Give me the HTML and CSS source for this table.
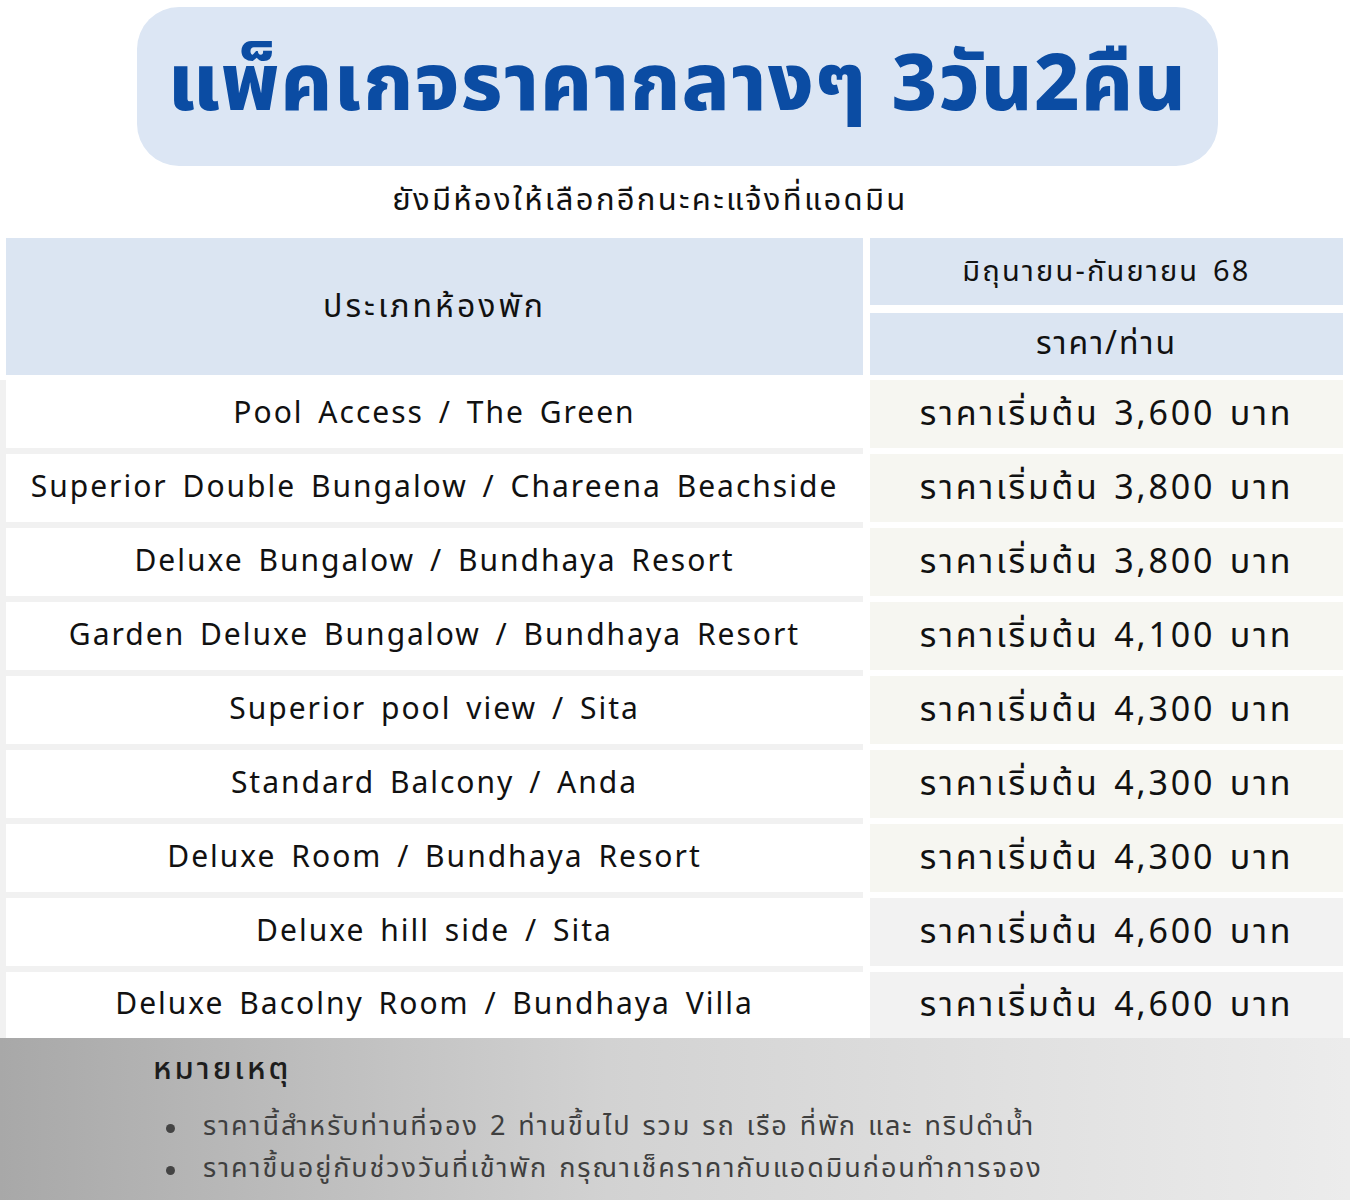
FILE: index.html
```html
<!DOCTYPE html>
<html lang="th">
<head>
<meta charset="utf-8">
<link rel="stylesheet" href="styles.css">
</head>
<body>
<div class="page">
  <header class="title-box">
    <h1 class="title">แพ็คเกจราคากลางๆ 3วัน2คืน</h1>
  </header>
  <p class="subtitle">ยังมีห้องให้เลือกอีกนะคะแจ้งที่แอดมิน</p>

  <div class="table">
    <div class="head-row">
      <div class="head-left">ประเภทห้องพัก</div>
      <div class="head-right">
        <div class="head-cell">มิถุนายน-กันยายน 68</div>
        <div class="head-cell head-cell-2">ราคา/ท่าน</div>
      </div>
    </div>

    <div class="row"><div class="room">Pool Access / The Green</div><div class="price">ราคาเริ่มต้น 3,600 บาท</div></div>
    <div class="row"><div class="room">Superior Double Bungalow / Chareena Beachside</div><div class="price">ราคาเริ่มต้น 3,800 บาท</div></div>
    <div class="row"><div class="room">Deluxe Bungalow / Bundhaya Resort</div><div class="price">ราคาเริ่มต้น 3,800 บาท</div></div>
    <div class="row"><div class="room">Garden Deluxe Bungalow / Bundhaya Resort</div><div class="price">ราคาเริ่มต้น 4,100 บาท</div></div>
    <div class="row"><div class="room">Superior pool view / Sita</div><div class="price">ราคาเริ่มต้น 4,300 บาท</div></div>
    <div class="row"><div class="room">Standard Balcony / Anda</div><div class="price">ราคาเริ่มต้น 4,300 บาท</div></div>
    <div class="row"><div class="room">Deluxe Room / Bundhaya Resort</div><div class="price">ราคาเริ่มต้น 4,300 บาท</div></div>
    <div class="row"><div class="room">Deluxe hill side / Sita</div><div class="price price-cool">ราคาเริ่มต้น 4,600 บาท</div></div>
    <div class="row last"><div class="room">Deluxe Bacolny Room / Bundhaya Villa</div><div class="price price-cool">ราคาเริ่มต้น 4,600 บาท</div></div>
  </div>

  <footer class="notes">
    <h2 class="notes-title">หมายเหตุ</h2>
    <ul class="notes-list">
      <li>ราคานี้สำหรับท่านที่จอง 2 ท่านขึ้นไป รวม รถ เรือ ที่พัก และ ทริปดำน้ำ</li>
      <li>ราคาขึ้นอยู่กับช่วงวันที่เข้าพัก กรุณาเช็คราคากับแอดมินก่อนทำการจอง</li>
    </ul>
  </footer>
</div>
</body>
</html>
```

FILE: styles.css
```css
* { box-sizing: border-box; }
html, body { margin: 0; padding: 0; background: #fff; }
body {
  font-family: "Noto Sans Thai", "Noto Sans", "DejaVu Sans", sans-serif;
  color: #111;
}
.page { width: 1350px; height: 1200px; overflow: hidden; }

.title-box {
  margin: 7px 132px 0 137px;
  height: 159px;
  background: #dce6f4;
  border-radius: 42px;
  display: flex;
  align-items: center;
  justify-content: center;
}
.title {
  margin: 0;
  font-size: 79px;
  font-weight: 800;
  color: #0b4ca3;
  letter-spacing: 1.4px;
  word-spacing: 2px;
  line-height: 1;
}
.subtitle {
  margin: 0;
  padding-right: 50px;
  height: 72px;
  line-height: 70px;
  text-align: center;
  font-size: 31px;
  letter-spacing: 2.3px;
  color: #111;
}

.table { display: flex; flex-direction: column; }
.head-row { display: flex; height: 142px; }
.head-left {
  background: #dbe5f2;
  margin-left: 6px;
  width: 857px;
  height: 137px;
  display: flex;
  align-items: center;
  justify-content: center;
  font-size: 32px;
  letter-spacing: 3px;
}
.head-right {
  margin-left: 7px;
  width: 473px;
  display: flex;
  flex-direction: column;
  gap: 8px;
}
.head-cell {
  height: 67px;
  background: #dbe5f2;
  display: flex;
  align-items: center;
  justify-content: center;
  font-size: 29px;
  letter-spacing: 2.2px;
  word-spacing: 4px;
}
.head-cell-2 { height: 62px; font-size: 32px; letter-spacing: 2px; }

.row { display: flex; height: 74px; }
.room {
  width: 863px;
  background: #fff;
  border-left: 6px solid #f1f1f1;
  border-bottom: 6px solid #f1f1f1;
  display: flex;
  align-items: center;
  justify-content: center;
  font-size: 30px;
  letter-spacing: 2px;
  word-spacing: 5px;
  color: #111;
}
.price {
  margin-left: 7px;
  width: 473px;
  height: 68px;
  background: #f6f6f1;
  display: flex;
  align-items: center;
  justify-content: center;
  font-size: 34px;
  letter-spacing: 2.8px;
  word-spacing: 3px;
  color: #111;
}
.price-cool { background: #f2f2f2; }
.row.last { height: 66px; }
.row.last .room { border-bottom: 0; }
.row.last .price { height: 66px; }

.notes {
  height: 162px;
  background: linear-gradient(90deg, #a8a8a8 0%, #d2d2d2 45%, #ececec 100%);
  padding: 12px 0 0 153px;
}
.notes-title {
  margin: 0;
  font-size: 31px;
  font-weight: 500;
  color: #1d1d1d;
  letter-spacing: 3px;
  line-height: 40px;
}
.notes-list {
  list-style: none;
  margin: 16px 0 0;
  padding: 0 0 0 50px;
  font-size: 27px;
  color: #3f3f3f;
  letter-spacing: 1.95px;
  word-spacing: 2px;
  line-height: 42px;
}
.notes-list li { position: relative; }
.notes-list li::before {
  content: "";
  position: absolute;
  left: -37px;
  top: 18px;
  width: 9px;
  height: 9px;
  border-radius: 50%;
  background: #444;
}
```
